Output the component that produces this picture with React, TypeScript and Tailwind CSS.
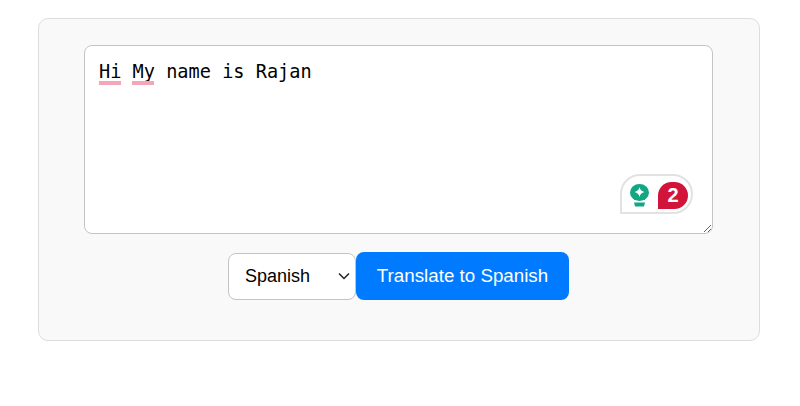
export default function App() {
  return (
    <div className="h-[406px] w-[800px] bg-white pl-[38px] pt-[18px] font-['Liberation_Sans',Arial,sans-serif]">
      <div className="flex h-[323px] w-[722px] flex-col items-center rounded-[10px] border border-[#dddddd] bg-[#f9f9f9] pt-[26px]">
        <div className="relative mr-[1px] h-[189px] w-[629px]">
          <textarea
            readOnly
            value="Hi My name is Rajan"
            className="block h-full w-full resize rounded-[8px] border border-[#c4c4c4] bg-white px-[14px] pb-[14px] pt-[15px] font-['DejaVu_Sans_Mono',monospace] text-[18.6px] leading-[22px] text-black outline-none"
          />
          {/* spelling underlines */}
          <span className="absolute left-[15px] top-[36px] h-[4px] w-[22px] bg-[#f4a5b8]" />
          <span className="absolute left-[48px] top-[36px] h-[4px] w-[22px] bg-[#f4a5b8]" />
          {/* grammar widget */}
          <div className="absolute left-[536px] top-[129px] flex h-[40px] w-[73px] items-center gap-[9px] rounded-[20px] rounded-bl-none border-2 border-[#e2e2e2] bg-white pl-[8px] pt-[2px]">
            <svg width="19" height="23" viewBox="0 0 19 23">
              <ellipse cx="9.500" cy="8.500" rx="9.500" ry="8.500" fill="#12a685" />
              <path d="M4 14h11v2H4z" fill="#12a685" />
              <path d="M9.500 3c.7 3 2 4.300 5 5-3 .7-4.300 2-5 5-.7-3-2-4.300-5-5 3-.7 4.300-2 5-5z" fill="#fff" />
              <path d="M4 18.500h11l-1 4H5z" fill="#12a685" />
            </svg>
            <div className="flex h-[27px] w-[30px] items-center justify-center rounded-[14px] rounded-bl-none bg-[#d2143a] text-[20px] font-bold leading-none text-white">
              2
            </div>
          </div>
        </div>
        <div className="mr-[1px] mt-[18px] flex items-center">
          <div className="relative h-[47px] w-[128px]">
            <select className="block h-full w-full appearance-none rounded-[8px] border border-[#c4c4c4] bg-white pl-[16px] text-[18px] text-black outline-none">
              <option>Spanish</option>
            </select>
            <svg
              className="pointer-events-none absolute left-[110px] top-[19px]"
              width="12"
              height="8"
              viewBox="0 0 12 8"
              fill="none"
              stroke="#222"
              strokeWidth="1.500"
            >
              <path d="M1 1.500l5 5 5-5" />
            </svg>
          </div>
          <button
            type="button"
            className="h-[48px] w-[213px] rounded-[8px] bg-[#007bff] text-[18.75px] text-white"
          >
            Translate to Spanish
          </button>
        </div>
      </div>
    </div>
  );
}
